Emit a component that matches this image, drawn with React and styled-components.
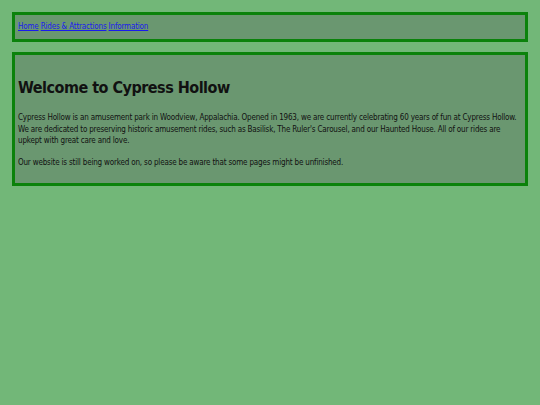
import React from "react";
import styled, { createGlobalStyle } from "styled-components";

const GlobalStyle = createGlobalStyle`
  html, body {
    margin: 0;
    padding: 0;
    background: #72b778;
  }
  body {
    font-family: "DejaVu Sans", sans-serif;
    font-stretch: condensed;
    font-size: 8px;
    letter-spacing: -0.18px;
    color: #111;
  }
`;

const Page = styled.div`
  display: flex;
  flex-direction: column;
  gap: 10px;
  padding: 12px;
`;

// both boxes share the same frame look
const Panel = styled.div`
  background: #6a9770;
  border: 3px solid #0b820b;
  padding: ${(p) => p.$pad || "6px"};
`;

const Nav = styled.nav`
  line-height: 12px;
`;

const NavLink = styled.a`
  color: #1a1aee;
  text-decoration: underline;
`;

const Heading = styled.h1`
  font-size: 16px;
  letter-spacing: -0.5px;
  line-height: 18px;
  font-weight: bold;
  margin: 18px 0 15px;
  color: #111;
`;

const Text = styled.p`
  margin: 0 0 10px;
  line-height: 11.5px;
`;

const links = ["Home", "Rides & Attractions", "Information"];

export default function App() {
  return (
    <>
      <GlobalStyle />
      <Page>
        <Panel $pad="6px 3px">
          <Nav>
            {links.map((l, i) => (
              <React.Fragment key={l}>
                {i > 0 && " "}
                <NavLink href="#">{l}</NavLink>
              </React.Fragment>
            ))}
          </Nav>
        </Panel>

        <Panel $pad="6px 3px 5px">
          <Heading>Welcome to Cypress Hollow</Heading>
          <Text>
            Cypress Hollow is an amusement park in Woodview, Appalachia. Opened in 1963, we are currently
            celebrating 60 years of fun at Cypress Hollow. We are dedicated to preserving historic amusement
            rides, such as Basilisk, The Ruler's Carousel, and our Haunted House. All of our rides are
            upkept with great care and love.
          </Text>
          <Text>
            Our website is still being worked on, so please be aware that some pages might be unfinished.
          </Text>
        </Panel>
      </Page>
    </>
  );
}
